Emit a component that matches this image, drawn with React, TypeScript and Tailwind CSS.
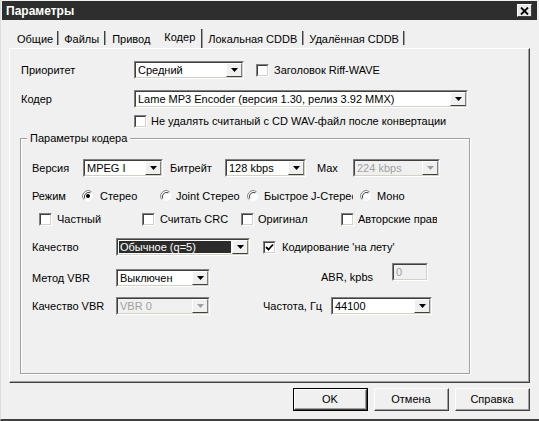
import React from 'react';

function Arrow({ disabled }: { disabled?: boolean }) {
  return (
    <svg width="7" height="4" viewBox="0 0 7 4">
      <polygon points="0,0 7,0 3.5,4" fill={disabled ? '#a0a0a0' : '#000'} />
    </svg>
  );
}

interface SelProps {
  className: string;
  value: string;
  disabled?: boolean;
  hl?: boolean;
}

function Sel({ className, value, disabled, hl }: SelProps) {
  return (
    <div
      className={`flex h-[18px] shrink-0 border border-t-[#808080] border-l-[#808080] border-b-white border-r-white ${className}`}
    >
      <div
        className={`flex flex-1 border border-t-[#404040] border-l-[#404040] border-b-[#d4d0c8] border-r-[#d4d0c8] ${
          disabled ? 'bg-[#f0f0f0]' : 'bg-white'
        }`}
      >
        {hl ? (
          <div className="m-[1px] flex flex-1 items-center overflow-hidden whitespace-nowrap bg-[#2b2b2b] pl-[1px] text-white">
            {value}
          </div>
        ) : (
          <div
            className={`flex flex-1 items-center overflow-hidden whitespace-nowrap pl-[2px] ${
              disabled ? 'text-[#a0a0a0]' : 'text-black'
            }`}
          >
            {value}
          </div>
        )}
        <div className="flex w-[16px] items-center justify-center border border-t-white border-l-white border-b-[#404040] border-r-[#808080] bg-[#f0f0f0]">
          <Arrow disabled={disabled} />
        </div>
      </div>
    </div>
  );
}

function Check({ checked }: { checked?: boolean }) {
  return (
    <div className="flex h-[13px] w-[13px] shrink-0 border border-t-[#808080] border-l-[#808080] border-b-white border-r-white">
      <div className="flex flex-1 items-center justify-center border border-t-[#404040] border-l-[#404040] border-b-[#d4d0c8] border-r-[#d4d0c8] bg-white">
        {checked && (
          <svg width="9" height="9" viewBox="0 0 9 9">
            <path d="M1 4 L3.5 6.5 L8 1.5" stroke="#000" strokeWidth="1.8" fill="none" />
          </svg>
        )}
      </div>
    </div>
  );
}

function Radio({ checked }: { checked?: boolean }) {
  return (
    <svg width="12" height="12" viewBox="0 0 12 12" className="shrink-0">
      <circle cx="6" cy="6" r="5" fill="#fff" />
      <path d="M1.8 9.5 A5.5 5.5 0 0 1 9.5 1.8" stroke="#808080" strokeWidth="1" fill="none" />
      <path d="M2.8 8.5 A4.3 4.3 0 0 1 8.5 2.8" stroke="#404040" strokeWidth="1" fill="none" />
      {checked && <circle cx="6" cy="6" r="2" fill="#000" />}
    </svg>
  );
}

function Sep({ tall }: { tall?: boolean }) {
  return (
    <div className={`flex shrink-0 ${tall ? 'h-[19px]' : 'h-[14px] mb-[3px]'}`}>
      <div className="w-px bg-[#404040]" />
      <div className="w-px bg-[#a0a0a0]" />
    </div>
  );
}

function Btn({ label, def }: { label: string; def?: boolean }) {
  return (
    <div
      className={`flex h-[23px] w-[75px] ${def ? 'border border-black' : ''}`}
    >
      <div className="flex flex-1 border border-t-white border-l-white border-b-[#404040] border-r-[#404040]">
        <div className="flex flex-1 items-center justify-center border-b border-r border-[#a0a0a0] bg-[#f0f0f0]">
          {label}
        </div>
      </div>
    </div>
  );
}

export default function App() {
  return (
    <div className="flex h-[421px] w-[539px] flex-col overflow-hidden border-b-2 border-l border-b-[#404040] border-l-[#dcdcdc] bg-[#f0f0f0] pt-[1px] font-['Liberation_Sans',Arial,sans-serif] text-[11px] leading-none text-black">
      {/* Title bar */}
      <div className="mr-[2px] ml-[1px] flex h-[19px] shrink-0 items-center bg-[#2e2e2e] pl-[4px] pr-[5px]">
        <span className="text-[12px] font-bold text-white">Параметры</span>
        <div className="ml-auto flex h-[13px] w-[15px] items-center justify-center border border-t-white border-l-white border-b-[#404040] border-r-[#404040] bg-[#e8e8e8]">
          <svg width="9" height="8" viewBox="0 0 9 8">
            <path d="M1 0.5 L8 7.5 M8 0.5 L1 7.5" stroke="#000" strokeWidth="1.8" />
          </svg>
        </div>
      </div>

      {/* Tabs */}
      <div className="mt-[9px] ml-[9px] flex h-[19px] shrink-0 items-end">
        <div className="flex items-end">
          <span className="mb-[2px] pl-[7px] pr-[4px] leading-[14px]">Общие</span>
          <Sep />
          <span className="mb-[2px] pl-[5px] pr-[5px] leading-[14px]">Файлы</span>
          <Sep />
          <span className="mb-[2px] pl-[6px] pr-[5px] leading-[14px]">Привод</span>
          <span className="mb-[4px] pl-[9px] pr-[6px] leading-[14px]">Кодер</span>
          <Sep tall />
          <span className="mb-[2px] pl-[5px] pr-[5px] leading-[14px]">Локальная CDDB</span>
          <Sep />
          <span className="mb-[2px] pl-[5px] pr-[4px] leading-[14px]">Удалённая CDDB</span>
          <Sep />
        </div>
      </div>

      {/* Panel */}
      <div className="ml-[8px] flex h-[335px] w-[521px] shrink-0 border border-t-white border-l-white border-b-[#404040] border-r-[#404040]">
        <div className="flex flex-1 flex-col border-b border-r border-[#a0a0a0]">
          {/* Priority */}
          <div className="mt-[12px] flex h-[18px] items-center pl-[11px]">
            <span className="w-[113px]">Приоритет</span>
            <Sel className="w-[110px]" value="Средний" />
            <div className="ml-[12px] flex items-center gap-[5px]">
              <Check />
              <span>Заголовок Riff-WAVE</span>
            </div>
          </div>

          {/* Coder */}
          <div className="mt-[11px] flex h-[18px] items-center pl-[11px]">
            <span className="w-[113px]">Кодер</span>
            <Sel className="w-[334px]" value="Lame MP3 Encoder (версия 1.30, релиз 3.92 MMX)" />
          </div>

          <div className="mt-[7px] flex h-[13px] items-center gap-[4px] pl-[124px]">
            <Check />
            <span>Не удалять считаный с CD WAV-файл после конвертации</span>
          </div>

          {/* Group box */}
          <div className="relative mt-[10px] ml-[10px] h-[236px] w-[450px] border border-[#a0a0a0] shadow-[inset_1px_1px_0_#fff,1px_1px_0_#fff]">
            <span className="absolute -top-[6px] left-[6px] bg-[#f0f0f0] px-[3px]">Параметры кодера</span>

            <div className="flex flex-col">
              {/* Version / bitrate */}
              <div className="mt-[20px] flex h-[18px] items-center pl-[11px]">
                <span className="w-[51px]">Версия</span>
                <Sel className="w-[80px]" value="MPEG I" />
                <span className="ml-[7px] w-[55px]">Битрейт</span>
                <Sel className="w-[81px]" value="128 kbps" />
                <span className="ml-[11px] w-[36px]">Max</span>
                <Sel className="w-[87px]" value="224 kbps" disabled />
              </div>

              {/* Mode */}
              <div className="mt-[10px] flex h-[18px] items-center pl-[11px]">
                <span className="w-[50px]">Режим</span>
                <div className="flex w-[78px] items-center gap-[6px]">
                  <Radio checked />
                  <span>Стерео</span>
                </div>
                <div className="flex w-[87px] items-center gap-[4px]">
                  <Radio />
                  <span>Joint Стерео</span>
                </div>
                <div className="flex w-[113px] items-center gap-[5px]">
                  <Radio />
                  <span className="w-[89px] overflow-hidden whitespace-nowrap">Быстрое J-Стерео</span>
                </div>
                <div className="flex items-center gap-[5px]">
                  <Radio />
                  <span>Моно</span>
                </div>
              </div>

              {/* Flags */}
              <div className="mt-[8px] flex h-[13px] items-center pl-[18px]">
                <div className="flex w-[103px] items-center gap-[5px]">
                  <Check />
                  <span>Частный</span>
                </div>
                <div className="flex w-[99px] items-center gap-[5px]">
                  <Check />
                  <span>Считать CRC</span>
                </div>
                <div className="flex w-[100px] items-center gap-[4px]">
                  <Check />
                  <span>Оригинал</span>
                </div>
                <div className="flex items-center gap-[4px]">
                  <Check />
                  <span className="w-[79px] overflow-hidden whitespace-nowrap">Авторские права</span>
                </div>
              </div>

              {/* Quality */}
              <div className="mt-[12px] flex h-[18px] items-center pl-[11px]">
                <span className="w-[84px]">Качество</span>
                <Sel className="w-[134px]" value="Обычное (q=5)" hl />
                <div className="ml-[13px] flex items-center gap-[6px]">
                  <Check checked />
                  <span>Кодирование 'на лету'</span>
                </div>
              </div>

              {/* VBR method */}
              <div className="mt-[13px] flex h-[18px] items-center pl-[11px]">
                <span className="w-[84px]">Метод VBR</span>
                <Sel className="w-[94px]" value="Выключен" />
                <span className="mt-[-2px] w-[163px] text-right">ABR, kpbs</span>
                <div className="mb-[12px] ml-[19px] flex h-[18px] w-[36px] border border-t-[#808080] border-l-[#808080] border-b-white border-r-white">
                  <div className="flex flex-1 items-center border border-t-[#404040] border-l-[#404040] border-b-[#d4d0c8] border-r-[#d4d0c8] bg-[#f0f0f0] pl-[2px] text-[#a0a0a0]">
                    0
                  </div>
                </div>
              </div>

              {/* VBR quality / frequency */}
              <div className="mt-[10px] flex h-[18px] items-center pl-[11px]">
                <span className="w-[84px]">Качество VBR</span>
                <Sel className="w-[94px]" value="VBR 0" disabled />
                <span className="ml-[53px] w-[68px]">Частота, Гц</span>
                <Sel className="w-[101px]" value="44100" />
              </div>
            </div>
          </div>
        </div>
      </div>

      {/* Buttons */}
      <div className="mt-[5px] flex justify-end gap-[6px] pr-[9px]">
        <Btn label="OK" def />
        <Btn label="Отмена" />
        <Btn label="Справка" />
      </div>
    </div>
  );
}
